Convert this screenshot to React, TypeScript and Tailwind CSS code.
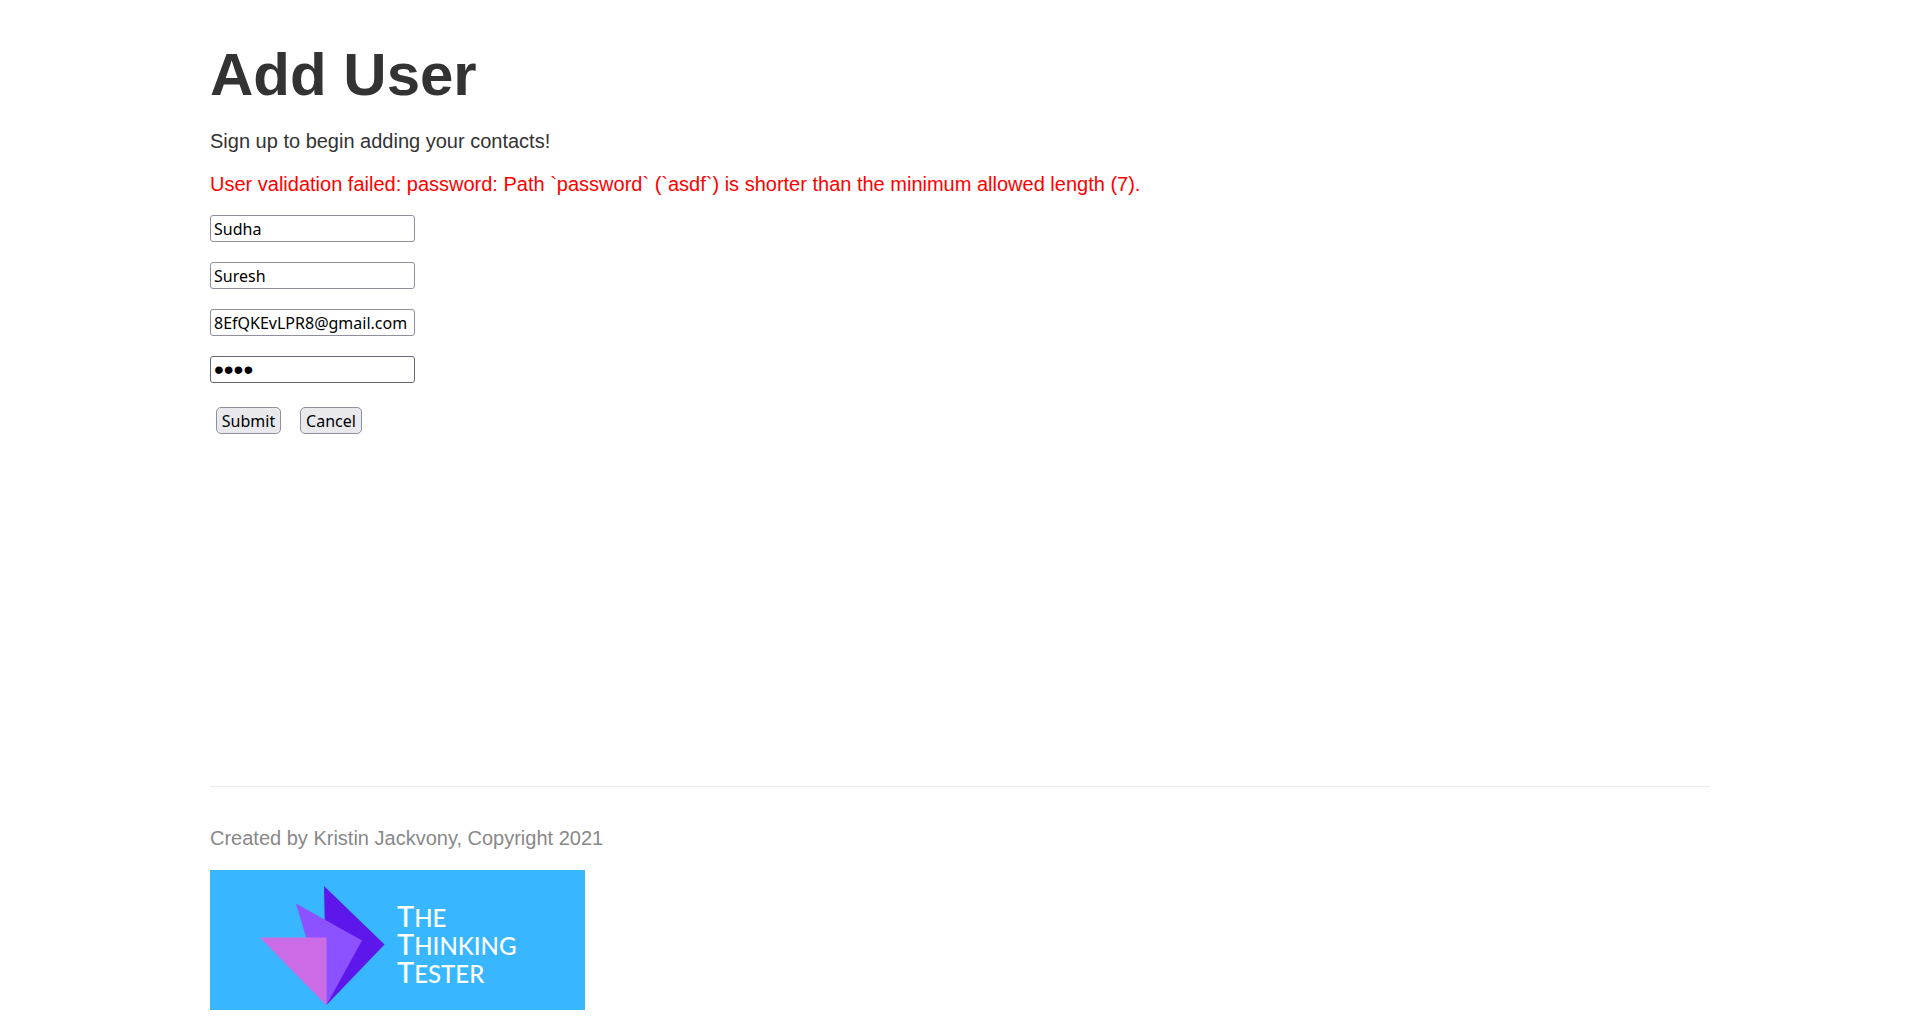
import { useState } from "react";

type Field = {
  id: string;
  label: string;
  type: string;
  value: string;
};

const initialFields: Field[] = [
  { id: "firstName", label: "First Name", type: "text", value: "Sudha" },
  { id: "lastName", label: "Last Name", type: "text", value: "Suresh" },
  { id: "email", label: "Email", type: "email", value: "8EfQKEvLPR8@gmail.com" },
  { id: "password", label: "Password", type: "password", value: "asdf" },
];

function Logo() {
  return (
    <svg viewBox="0 0 375 140" className="mt-5 block h-[140px] w-[375px]" role="img" aria-label="The Thinking Tester">
      <rect width="375" height="140" fill="#38b6ff" />
      <polygon points="114,16 174.500,74.500 116.500,135" fill="#5e17eb" />
      <polygon points="86,33.500 152,70.500 116.500,135" fill="#8c52ff" />
      <polygon points="50,67.500 116.500,67.500 116.500,135.500" fill="#cb6ce6" />
      <g fill="#ffffff" fontFamily="Lato, sans-serif" fontSize="24" fontWeight="500">
        <text x="187" y="57">
          <tspan fontSize="29">T</tspan>HE
        </text>
        <text x="187" y="85">
          <tspan fontSize="29">T</tspan>HINKING
        </text>
        <text x="187" y="113">
          <tspan fontSize="29">T</tspan>ESTER
        </text>
      </g>
    </svg>
  );
}

export default function App() {
  const [fields, setFields] = useState(initialFields);

  const update = (id: string, value: string) =>
    setFields((current) => current.map((f) => (f.id === id ? { ...f, value } : f)));

  return (
    <div className="mx-auto max-w-[1500px] pt-10 font-['Liberation_Sans',Arial,sans-serif] text-[20px] leading-[23px] text-[#333333]">
      <main className="min-h-[746px]">
        <h1 className="text-[60px] leading-[70px] font-bold">Add User</h1>
        <p className="mt-5">Sign up to begin adding your contacts!</p>
        <p className="mt-5 text-[#ff0000]">
          User validation failed: password: Path `password` (`asdf`) is shorter than the minimum allowed length (7).
        </p>
        <form className="mt-[19px]" onSubmit={(e) => e.preventDefault()}>
          <div className="flex flex-col items-start gap-5">
            {fields.map((f) => (
              <input
                key={f.id}
                id={f.id}
                type={f.type}
                aria-label={f.label}
                value={f.value}
                onChange={(e) => update(f.id, e.target.value)}
                className={
                  "h-[27px] w-[205px] rounded-[3px] border bg-white px-[3px] text-black outline-none " +
                  (f.type === "password"
                    ? "border-[#676774] font-['Liberation_Sans',Arial,sans-serif] text-[28px]"
                    : "border-[#8f8f9d] font-['Noto_Sans',Tahoma,sans-serif] text-[16px]")
                }
              />
            ))}
          </div>
          <div className="mt-6 ml-1.5 flex gap-[19px] font-['Noto_Sans',Tahoma,sans-serif] text-[16px] text-black">
            <button type="submit" className="h-[27px] w-[65px] rounded-[5px] border border-[#8f8f9d] bg-[#e9e9ed] pt-0.5">
              Submit
            </button>
            <button type="button" className="h-[27px] w-[62px] rounded-[5px] border border-[#8f8f9d] bg-[#e9e9ed] pt-0.5">
              Cancel
            </button>
          </div>
        </form>
      </main>
      <footer className="border-t border-[#eeeeee] pt-10 text-[#888888]">
        <p>Created by Kristin Jackvony, Copyright 2021</p>
        <Logo />
      </footer>
    </div>
  );
}
